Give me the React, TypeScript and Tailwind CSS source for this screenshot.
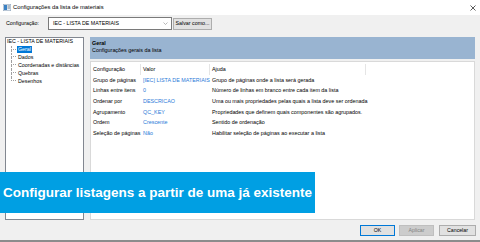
const FONT = { fontFamily: '"Liberation Sans", Arial, sans-serif' };

type Row = { label: string; value: string; help: string };

const ROWS: Row[] = [
  { label: "Grupo de páginas", value: "[IEC] LISTA DE MATERIAIS", help: "Grupo de páginas onde a lista será gerada" },
  { label: "Linhas entre itens", value: "0", help: "Número de linhas em branco entre cada item da lista" },
  { label: "Ordenar por", value: "DESCRICAO", help: "Uma ou mais propriedades pelas quais a lista deve ser ordenada" },
  { label: "Agrupamento", value: "QC_KEY", help: "Propriedades que definem quais componentes são agrupados." },
  { label: "Ordem", value: "Crescente", help: "Sentido de ordenação" },
  { label: "Seleção de páginas", value: "Não", help: "Habilitar seleção de páginas ao executar a lista" },
];

const TREE_ITEMS = ["Geral", "Dados", "Coordenadas e distâncias", "Quebras", "Desenhos"];

function TreeItem({ label, selected, last }: { label: string; selected?: boolean; last?: boolean }) {
  return (
    <div className="flex h-[7.8px] items-stretch">
      <div className="flex w-[5px] flex-col">
        <div className="h-1/2 border-b border-l border-dotted border-[#a0a0a0]" />
        <div className={last ? "h-1/2" : "h-1/2 border-l border-dotted border-[#a0a0a0]"} />
      </div>
      <div className="flex items-center pl-[1px]">
        <span
          className={
            selected
              ? "bg-[#0078d7] px-[1px] leading-[6.4px] text-white"
              : "px-[1px] leading-[6.4px] text-black"
          }
        >
          {label}
        </span>
      </div>
    </div>
  );
}

function DialogButton({
  label,
  variant,
  className,
}: {
  label: string;
  variant: "default" | "disabled" | "normal";
  className: string;
}) {
  const look =
    variant === "default"
      ? "border-[#0078d7] bg-[#e1e1e1] text-black"
      : variant === "disabled"
      ? "border-[#bfbfbf] bg-[#cccccc] text-[#838383]"
      : "border-[#adadad] bg-[#e1e1e1] text-black";
  return (
    <div
      className={`flex h-[11px] items-center justify-center border text-[5.2px] ${look} ${className}`}
    >
      {label}
    </div>
  );
}

export default function App() {
  return (
    <div
      className="relative flex h-[242px] w-[480px] flex-col overflow-hidden bg-[#f0f0f0] text-black"
      style={FONT}
    >
      {/* title bar */}
      <div className="flex h-[15px] shrink-0 items-center bg-white pl-[3px] pr-[3px]">
        <svg width="8" height="7" viewBox="0 0 8 7" className="shrink-0">
          <rect x="0" y="0" width="8" height="7" fill="#e8eef5" stroke="#8aa0b8" strokeWidth="1" />
          <rect x="1" y="1" width="3" height="5" fill="#3b82c4" />
          <rect x="4.5" y="1.5" width="2.5" height="1" fill="#7a8a9a" />
          <rect x="4.5" y="3.5" width="2.5" height="1" fill="#7a8a9a" />
        </svg>
        <span className="ml-[2px] text-[5.8px] leading-none">Configurações da lista de materiais</span>
        <div className="flex-1" />
        <svg width="6" height="6" viewBox="0 0 6 6" className="mr-[1px]">
          <path d="M0.5 0.5 L5.5 5.5 M5.5 0.5 L0.5 5.5" stroke="#333" strokeWidth="0.8" />
        </svg>
      </div>

      {/* configuration row */}
      <div className="flex h-[22px] shrink-0 items-start pt-[2px] pl-[6px] text-[5.3px]">
        <span className="mt-[4px] w-[42px] leading-none">Configuração:</span>
        <div className="flex h-[13px] w-[124px] items-center border border-[#7a7a7a] bg-white pl-[4px] pr-[3px]">
          <span className="flex-1 leading-none">IEC - LISTA DE MATERIAIS</span>
          <svg width="5" height="3" viewBox="0 0 5 3">
            <path d="M0.5 0.5 L2.5 2.5 L4.5 0.5" stroke="#8a8a8a" strokeWidth="0.6" fill="none" />
          </svg>
        </div>
        <div className="ml-[1px] mt-[1px] flex h-[12px] w-[39px] items-center justify-center border border-[#adadad] bg-[#e1e1e1] leading-none">
          Salvar como...
        </div>
      </div>

      {/* panels */}
      <div className="flex h-[183px] shrink-0 gap-[6px] px-[5px]">
        <div className="w-[79px] border border-[#828790] bg-white pl-[1px] text-[5.3px]">
          <div className="flex h-[7.8px] items-center leading-none">IEC - LISTA DE MATERIAIS</div>
          <div className="ml-[4px]">
            {TREE_ITEMS.map((item, i) => (
              <TreeItem key={item} label={item} selected={i === 0} last={i === TREE_ITEMS.length - 1} />
            ))}
          </div>
        </div>

        <div className="flex flex-1 flex-col">
          <div className="h-[22px] shrink-0 bg-[#99b4d1] pl-[2px] pt-[3px] text-[5.4px]">
            <div className="h-[7px] font-bold leading-[7px]">Geral</div>
            <div className="h-[7px] leading-[7px]">Configurações gerais da lista</div>
          </div>
          <div className="mt-[2px] flex-1 border border-[#d9d9d9] bg-white pt-[2px] text-[5.4px]">
            <div className="grid h-[10.6px] grid-cols-[50px_69px_156px_1fr] items-center">
              <div className="flex h-full items-center border-r border-[#e5e5e5] pl-[2px]">Configuração</div>
              <div className="flex h-full items-center border-r border-[#e5e5e5] pl-[2px]">Valor</div>
              <div className="flex h-full items-center border-r border-[#e5e5e5] pl-[2px]">Ajuda</div>
              <div />
            </div>
            {ROWS.map((row) => (
              <div key={row.label} className="grid h-[10.6px] grid-cols-[50px_69px_156px_1fr] items-center">
                <div className="pl-[2px] whitespace-nowrap">{row.label}</div>
                <div className="pl-[2px] whitespace-nowrap text-[#2a7ad8]">{row.value}</div>
                <div className="pl-[2px] whitespace-nowrap">{row.help}</div>
                <div />
              </div>
            ))}
          </div>
        </div>
      </div>

      {/* footer buttons */}
      <div className="flex shrink-0 justify-end pt-[5px] pr-[4px]">
        <DialogButton label="OK" variant="default" className="w-[35px]" />
        <DialogButton label="Aplicar" variant="disabled" className="ml-[4px] w-[35px]" />
        <DialogButton label="Cancelar" variant="normal" className="ml-[5px] w-[37px]" />
      </div>
      <div className="flex-1" />
      <div className="h-[2px] shrink-0 bg-[#8c8c8c]" />

      {/* caption banner over the dialog */}
      <div className="absolute left-0 top-[172px] flex h-[41px] w-[315px] items-center bg-[#009fe3] pl-[3px]">
        <span className="whitespace-nowrap text-[13.5px] font-bold leading-none text-white">
          Configurar listagens a partir de uma já existente
        </span>
      </div>
    </div>
  );
}
